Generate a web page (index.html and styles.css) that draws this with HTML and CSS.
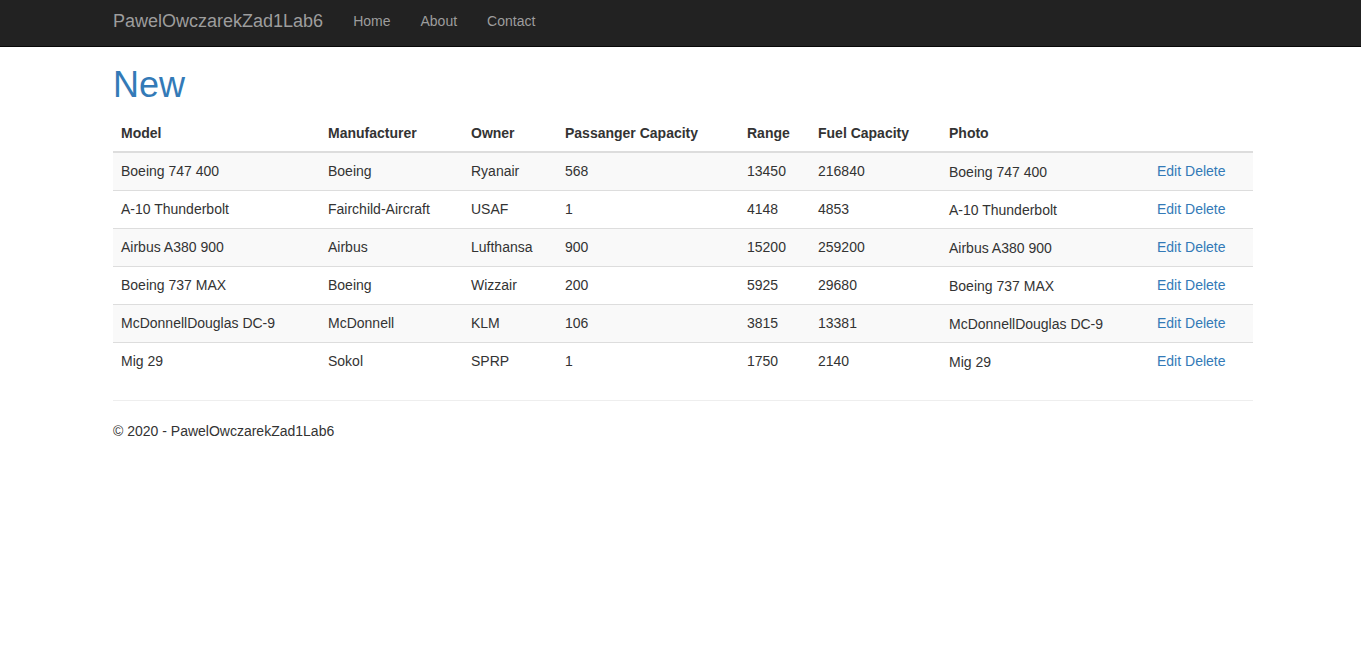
FILE: index.html
```html
<!DOCTYPE html>
<html>
<head>
<meta charset="utf-8">
<title>New</title>
<link rel="stylesheet" href="styles.css">
</head>
<body>
<nav class="navbar">
  <div class="container nav-inner">
    <a class="brand" href="#">PawelOwczarekZad1Lab6</a>
    <ul class="nav-links">
      <li><a href="#">Home</a></li>
      <li><a href="#">About</a></li>
      <li><a href="#">Contact</a></li>
    </ul>
  </div>
</nav>
<main class="container">
  <h1 class="title">New</h1>
  <table class="table">
    <colgroup>
      <col class="c-model"><col class="c-man"><col class="c-owner"><col class="c-pass"><col class="c-range"><col class="c-fuel"><col class="c-photo"><col class="c-act">
    </colgroup>
    <thead>
      <tr><th>Model</th><th>Manufacturer</th><th>Owner</th><th>Passanger Capacity</th><th>Range</th><th>Fuel Capacity</th><th>Photo</th><th></th></tr>
    </thead>
    <tbody>
      <tr><td>Boeing 747 400</td><td>Boeing</td><td>Ryanair</td><td>568</td><td>13450</td><td>216840</td><td class="photo">Boeing 747 400</td><td><a href="#">Edit</a> <a href="#">Delete</a></td></tr>
      <tr><td>A-10 Thunderbolt</td><td>Fairchild-Aircraft</td><td>USAF</td><td>1</td><td>4148</td><td>4853</td><td class="photo">A-10 Thunderbolt</td><td><a href="#">Edit</a> <a href="#">Delete</a></td></tr>
      <tr><td>Airbus A380 900</td><td>Airbus</td><td>Lufthansa</td><td>900</td><td>15200</td><td>259200</td><td class="photo">Airbus A380 900</td><td><a href="#">Edit</a> <a href="#">Delete</a></td></tr>
      <tr><td>Boeing 737 MAX</td><td>Boeing</td><td>Wizzair</td><td>200</td><td>5925</td><td>29680</td><td class="photo">Boeing 737 MAX</td><td><a href="#">Edit</a> <a href="#">Delete</a></td></tr>
      <tr><td>McDonnellDouglas DC-9</td><td>McDonnell</td><td>KLM</td><td>106</td><td>3815</td><td>13381</td><td class="photo">McDonnellDouglas DC-9</td><td><a href="#">Edit</a> <a href="#">Delete</a></td></tr>
      <tr><td>Mig 29</td><td>Sokol</td><td>SPRP</td><td>1</td><td>1750</td><td>2140</td><td class="photo">Mig 29</td><td><a href="#">Edit</a> <a href="#">Delete</a></td></tr>
    </tbody>
  </table>
  <hr class="sep">
  <footer class="footer">
    <p>&copy; 2020 - PawelOwczarekZad1Lab6</p>
  </footer>
</main>
</body>
</html>
```

FILE: styles.css
```css
* { box-sizing: border-box; }
html, body { margin: 0; padding: 0; }
body {
  font-family: "Liberation Sans", Arial, Helvetica, sans-serif;
  font-size: 14px;
  line-height: 20px;
  color: #333;
  background: #fff;
}
a { color: #337ab7; text-decoration: none; }

.container {
  width: 1140px;
  margin-left: 113px;
}

.navbar {
  background: #222;
  border-bottom: 1px solid #080808;
  height: 47px;
}
.nav-inner {
  display: flex;
  align-items: flex-start;
}
.brand {
  font-size: 18px;
  line-height: 20px;
  color: #9d9d9d;
  padding: 11px 15px 0 0;
}
.nav-links {
  list-style: none;
  margin: 0;
  padding: 0;
  display: flex;
}
.nav-links a {
  display: block;
  color: #9d9d9d;
  line-height: 20px;
  padding: 11px 15px 0 15px;
}

.title {
  font-family: "Liberation Sans", Arial, sans-serif;
  font-weight: 500;
  font-size: 36px;
  line-height: 39.6px;
  color: #337ab7;
  margin: 18px 0 10px;
}

.table {
  width: 1140px;
  border-collapse: collapse;
  border-spacing: 0;
  table-layout: fixed;
  margin-bottom: 20px;
}
.c-model { width: 207px; }
.c-man { width: 143px; }
.c-owner { width: 94px; }
.c-pass { width: 182px; }
.c-range { width: 71px; }
.c-fuel { width: 131px; }
.c-photo { width: 208px; }
.c-act { width: 104px; }

.table th {
  text-align: left;
  font-weight: bold;
  padding: 8px;
  line-height: 20px;
  border-bottom: 2px solid #ddd;
  vertical-align: bottom;
}
.table td {
  padding: 8px;
  line-height: 21px;
  vertical-align: top;
  border-bottom: 1px solid #ddd;
  white-space: nowrap;
}
.table tbody tr:last-child td { border-bottom: 0; }
.table tbody tr:nth-child(odd) { background: #f9f9f9; }
.table td.photo { padding-top: 9px; padding-bottom: 7px; }

.sep {
  margin: 0 0 20px;
  border: 0;
  border-top: 1px solid #eee;
  height: 0;
}
.footer p { margin: 0 0 10px; }
```
